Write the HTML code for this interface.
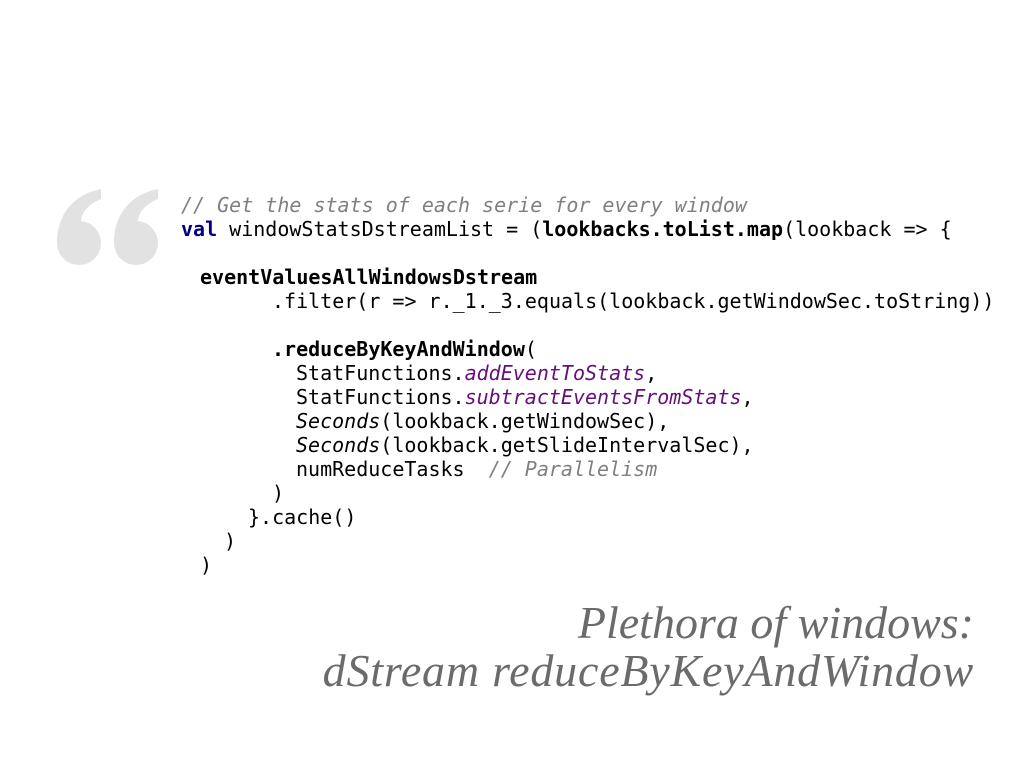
<!DOCTYPE html>
<html><head><meta charset="utf-8"><style>
html,body{margin:0;padding:0;background:#fff;}
body{width:1024px;height:768px;position:relative;overflow:hidden;}
.l{position:absolute;font-family:"DejaVu Sans Mono","Liberation Mono",monospace;font-size:20px;line-height:24px;color:#000;white-space:pre;}
.c{color:#808080;font-style:italic}
.k{color:#000080;font-weight:bold}
.b{font-weight:bold}
.p{color:#660e7a;font-style:italic}
.i{font-style:italic}
.t{position:absolute;right:50px;font-family:"Liberation Serif",serif;font-style:italic;font-size:46px;color:#6b6b6b;white-space:nowrap;}
</style></head><body>
<svg style="position:absolute;left:0;top:0" width="200" height="300">
<g fill="#e2e2e2">
<circle cx="79" cy="243" r="22"/>
<path d="M57,243 C57,213 75,194 101,189 L101,199 C88,204 80,214 81,224 Z"/>
<circle cx="136" cy="243" r="22"/>
<path d="M114,243 C114,213 132,194 158,189 L158,199 C145,204 137,214 138,224 Z"/>
</g></svg>
<div class="l c" style="left:181px;top:193px">// Get the stats of each serie for every window</div>
<div class="l" style="left:181px;top:217px"><span class="k">val</span> windowStatsDstreamList = (<span class="b">lookbacks.toList.map</span>(lookback =&gt; {</div>
<div class="l b" style="left:200px;top:265px">eventValuesAllWindowsDstream</div>
<div class="l" style="left:272px;top:289px">.filter(r =&gt; r._1._3.equals(lookback.getWindowSec.toString))</div>
<div class="l" style="left:272px;top:337px"><span class="b">.reduceByKeyAndWindow</span>(</div>
<div class="l" style="left:296px;top:361px">StatFunctions.<span class="p">addEventToStats</span>,</div>
<div class="l" style="left:296px;top:385px">StatFunctions.<span class="p">subtractEventsFromStats</span>,</div>
<div class="l" style="left:296px;top:409px"><span class="i">Seconds</span>(lookback.getWindowSec),</div>
<div class="l" style="left:296px;top:433px"><span class="i">Seconds</span>(lookback.getSlideIntervalSec),</div>
<div class="l" style="left:296px;top:457px">numReduceTasks  <span class="c">// Parallelism</span></div>
<div class="l" style="left:272px;top:481px">)</div>
<div class="l" style="left:248px;top:505px">}.cache()</div>
<div class="l" style="left:224px;top:529px">)</div>
<div class="l" style="left:200px;top:553px">)</div>
<div class="t" style="top:596px">Plethora of windows:</div>
<div class="t" style="top:644px;letter-spacing:0.8px">dStream reduceByKeyAndWindow</div>
</body></html>
